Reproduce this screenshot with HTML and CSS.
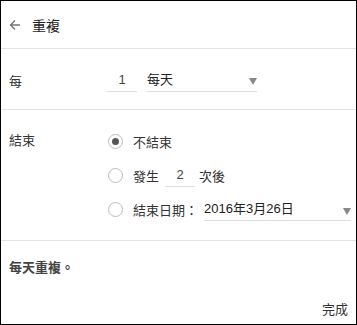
FILE: index.html
```html
<!DOCTYPE html>
<html lang="zh-Hant">
<head>
  <meta charset="UTF-8" />
  <meta name="viewport" content="width=device-width, initial-scale=1.0">
  <title>重複</title>
  <link rel="stylesheet" href="styles.css">
</head>
<body>
  <div class="dialog">
    <!-- Header -->
    <div class="header">
      <svg class="back" width="12" height="12" viewBox="0 0 12 12">
        <path d="M11 6H1.5M6 1.5L1.5 6L6 10.5" fill="none" stroke="#777" stroke-width="1.4"/>
      </svg>
      <span class="title">重複</span>
    </div>

    <!-- Repeat every -->
    <div class="section repeat">
      <div class="row">
        <span class="label">每</span>
        <span class="num">1</span>
        <span class="select freq">每天<i class="caret"></i></span>
      </div>
    </div>

    <!-- End -->
    <div class="section ends">
      <span class="label">結束</span>
      <div class="options">
        <div class="option">
          <span class="radio checked"></span>
          <span>不結束</span>
        </div>
        <div class="option">
          <span class="radio"></span>
          <span>發生</span>
          <span class="num count">2</span>
          <span>次後</span>
        </div>
        <div class="option">
          <span class="radio"></span>
          <span>結束日期：</span>
          <span class="select date">2016年3月26日<i class="caret"></i></span>
        </div>
      </div>
    </div>

    <div class="summary">每天重複。</div>

    <div class="footer">
      <span class="done">完成</span>
    </div>
  </div>
</body>
</html>
```

FILE: styles.css
```css
body {
  margin: 0;
  padding: 0;
  font-family: 'Liberation Sans', 'Noto Sans CJK TC', sans-serif;
  font-size: 13px;
  color: #333;
  background: #fff;
}
.dialog {
  width: 357px;
  height: 325px;
  box-sizing: border-box;
  border: 1px solid #000;
  display: flex;
  flex-direction: column;
}
.header {
  height: 47px;
  display: flex;
  align-items: center;
  padding-left: 8px;
  border-bottom: 1px solid #e3e3e3;
}
.back {
  margin-right: 11px;
}
.title {
  font-size: 14px;
  color: #222;
}
.section {
  border-bottom: 1px solid #e3e3e3;
  padding: 0 8px;
}
.repeat {
  padding-top: 15px;
  padding-bottom: 13px;
}
.row {
  height: 32px;
  display: flex;
  align-items: center;
}
.label {
  width: 98px;
}
.num {
  display: inline-block;
  width: 30px;
  height: 22px;
  line-height: 22px;
  text-align: center;
  border-bottom: 1px solid #ddd;
  color: #444;
}
.select {
  position: relative;
  display: inline-block;
  height: 22px;
  line-height: 22px;
  border-bottom: 1px solid #ddd;
  color: #222;
}
.freq {
  width: 110px;
  margin-left: 10px;
}
.caret {
  position: absolute;
  right: 0;
  top: 9px;
  width: 0;
  height: 0;
  border-left: 4px solid transparent;
  border-right: 4px solid transparent;
  border-top: 7px solid #888;
}
.ends {
  display: flex;
  padding-top: 14px;
  padding-bottom: 14px;
}
.ends .label {
  line-height: 34px;
  width: 99px;
}
.options {
  flex: 1;
}
.option {
  height: 34px;
  display: flex;
  align-items: center;
}
.radio {
  width: 13px;
  height: 13px;
  border: 1px solid #bbb;
  border-radius: 50%;
  margin-right: 10px;
  position: relative;
}
.radio.checked::after {
  content: '';
  position: absolute;
  left: 3px;
  top: 3px;
  width: 7px;
  height: 7px;
  border-radius: 50%;
  background: #555;
}
.count {
  margin: 0 4px 0 6px;
}
.date {
  flex: 1;
  margin-left: 6px;
  margin-right: -3px;
}
.date .caret {
  right: 0;
  top: 10px;
}
.summary {
  padding: 16px 8px 0;
  font-weight: bold;
  color: #444;
  height: 36px;
}
.footer {
  flex: 1;
  display: flex;
  align-items: flex-end;
  justify-content: flex-end;
  padding: 0 8px 6px;
}
.done {
  color: #333;
}
```
